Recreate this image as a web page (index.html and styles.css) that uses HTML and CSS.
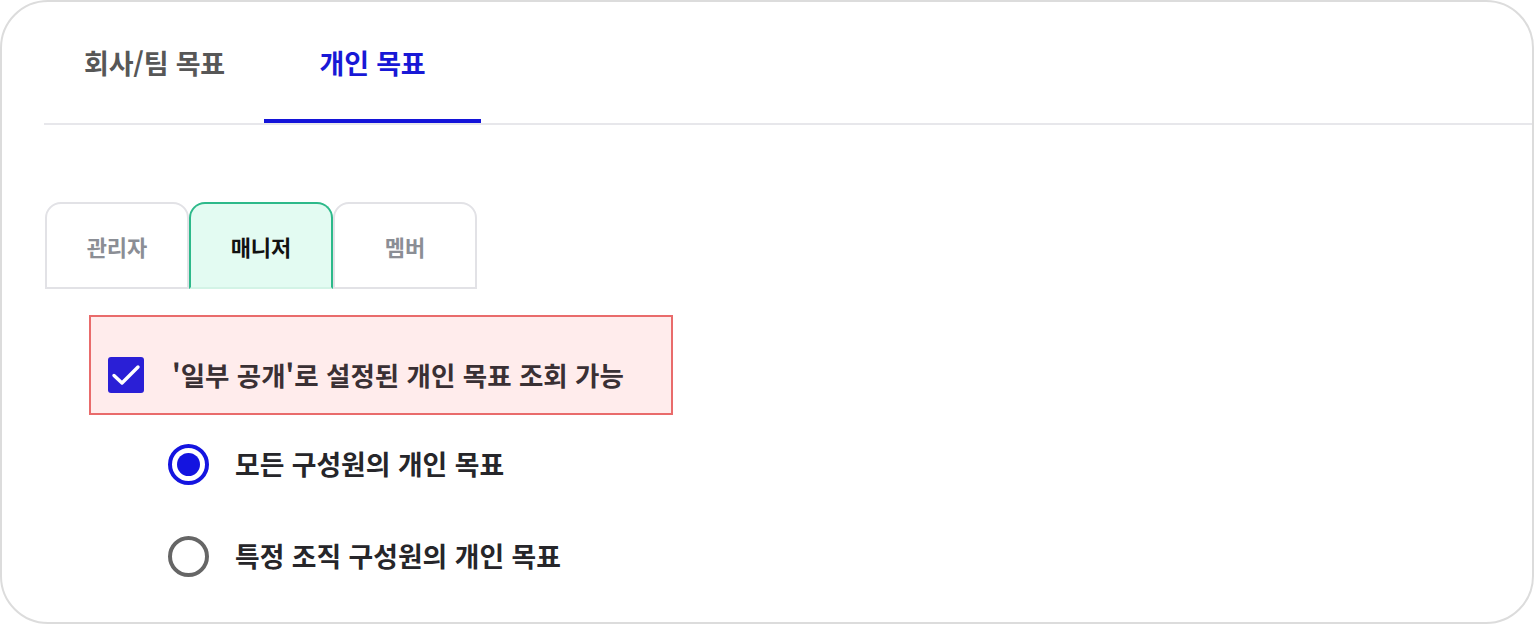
FILE: index.html
```html
<!DOCTYPE html>
<html lang="ko">
<head>
<meta charset="utf-8">
<link rel="stylesheet" href="styles.css">
</head>
<body>
<div class="card">
  <div class="tabbar">
    <div class="tab">회사/팀 목표</div>
    <div class="tab tab-active">개인 목표</div>
  </div>
  <div class="roles">
    <div class="role">관리자</div>
    <div class="role role-active">매니저</div>
    <div class="role">멤버</div>
  </div>
  <div class="permission">
    <span class="checkbox">
      <svg viewBox="0 0 36 36" width="36" height="36"><path d="M6 18.5 L14 26 L30 10" fill="none" stroke="#fff" stroke-width="3.4" stroke-linecap="round" stroke-linejoin="round"/></svg>
    </span>
    <span class="perm-label">'일부 공개'로 설정된 개인 목표 조회 가능</span>
  </div>
  <div class="options">
    <div class="option">
      <span class="radio radio-on"><span class="dot"></span></span>
      <span class="opt-label">모든 구성원의 개인 목표</span>
    </div>
    <div class="option">
      <span class="radio"></span>
      <span class="opt-label">특정 조직 구성원의 개인 목표</span>
    </div>
  </div>
</div>
</body>
</html>
```
FILE: styles.css
```css
* { box-sizing: border-box; }
html, body { margin: 0; padding: 0; background: #ffffff; }
body {
  font-family: "Noto Sans CJK KR", "Noto Sans", sans-serif;
  font-weight: 700;
}
.card {
  width: 1534px;
  height: 624px;
  border: 2px solid #dcdcdc;
  border-radius: 48px;
  background: #fff;
  overflow: hidden;
}
.tabbar {
  display: flex;
  margin-left: 42px;
  padding-left: 1px;
  border-bottom: 2px solid #e7e7eb;
}
.tab {
  width: 219px;
  height: 121px;
  padding-top: 4px;
  display: flex;
  align-items: center;
  justify-content: center;
  font-size: 27px;
  line-height: 1;
  letter-spacing: -0.2px;
  color: #575757;
  border-bottom: 4px solid transparent;
}
.tab-active {
  width: 217px;
  color: #1818d6;
  border-bottom-color: #1414d9;
}
.roles {
  display: flex;
  margin: 77px 0 0 43px;
}
.role {
  width: 144px;
  height: 87px;
  display: flex;
  align-items: center;
  justify-content: center;
  border: 2px solid #e2e2e6;
  border-radius: 16px 16px 0 0;
  font-size: 22px;
  line-height: 1;
  color: #8b8e95;
}
.role-active {
  background: #e3fbf2;
  border-color: #2db98a;
  border-bottom-color: #d3f3e6;
  color: #111;
}
.permission {
  display: flex;
  align-items: center;
  gap: 28px;
  width: 584px;
  height: 100px;
  margin: 26px 0 0 87px;
  padding: 20px 17px 0;
  border: 2px solid #e96b6b;
  background: #ffecec;
}
.checkbox {
  width: 36px;
  height: 36px;
  flex: none;
  border-radius: 3px;
  background: #2a1fd6;
  display: flex;
}
.perm-label {
  font-size: 26.5px;
  line-height: 1;
  color: #3a3034;
}
.options {
  display: flex;
  flex-direction: column;
  gap: 51px;
  margin: 29px 0 0 166px;
}
.option {
  display: flex;
  align-items: center;
  gap: 26px;
  height: 41px;
}
.radio {
  width: 41px;
  height: 41px;
  flex: none;
  border-radius: 50%;
  border: 4px solid #666;
  display: flex;
  align-items: center;
  justify-content: center;
}
.radio-on { border-color: #1414e0; }
.dot {
  width: 23px;
  height: 23px;
  border-radius: 50%;
  background: #1414e0;
}
.opt-label {
  font-size: 26.8px;
  line-height: 1;
  color: #26262a;
}
```
